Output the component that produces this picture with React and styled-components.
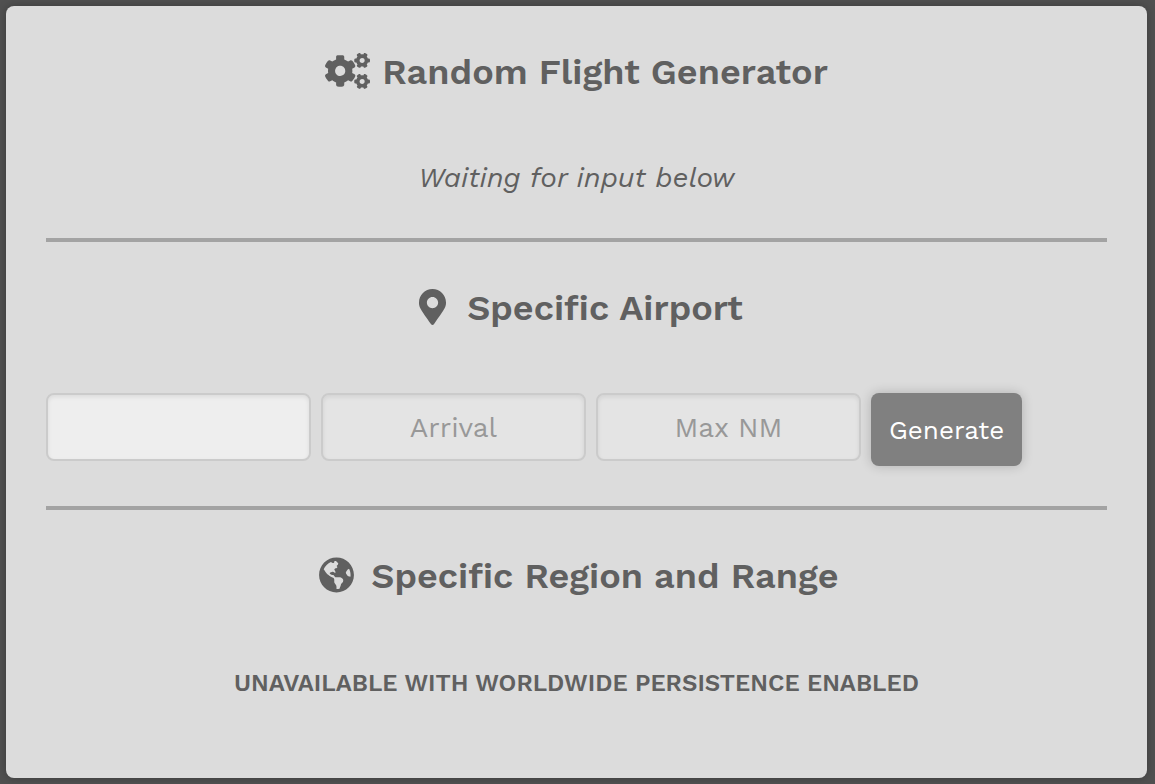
import styled, { createGlobalStyle } from 'styled-components'
import { FaCogs, FaMapMarkerAlt, FaGlobeAmericas } from 'react-icons/fa'

const App = () => {
  return (
    <>
      <GlobalStyle />
      <Panel>
        <Section>
          <Title as='h1'>
            <FaCogs aria-hidden='true' />
            Random Flight Generator
          </Title>
          <Status>Waiting for input below</Status>
        </Section>
        <Section $divided>
          <Title>
            <FaMapMarkerAlt aria-hidden='true' />
            Specific Airport
          </Title>
          <Form onSubmit={(e) => e.preventDefault()}>
            <Field type='text' aria-label='Departure' $active />
            <Field type='text' aria-label='Arrival' placeholder='Arrival' />
            <Field type='text' aria-label='Max NM' placeholder='Max NM' />
            <Generate type='submit'>Generate</Generate>
          </Form>
        </Section>
        <Section $divided>
          <Title>
            <FaGlobeAmericas aria-hidden='true' />
            Specific Region and Range
          </Title>
          <Notice>UNAVAILABLE WITH WORLDWIDE PERSISTENCE ENABLED</Notice>
        </Section>
      </Panel>
    </>
  )
}

const GlobalStyle = createGlobalStyle`
  * {
    box-sizing: border-box;
  }

  body {
    margin: 0;
    padding: 6px 8px 6px 6px;
    background: #505050;
    color: #606060;
    font-family: 'Work Sans', Inter, sans-serif;
  }
`

const Panel = styled.main`
  padding: 0 40px 33px;
  background: #dcdcdc;
  border-radius: 8px;
  box-shadow: 0 0 8px rgba(0, 0, 0, 0.25);
`

const Section = styled.section`
  padding: 43px 0 40px;
  border-top: ${(props) => (props.$divided ? '4px solid #a3a3a3' : 'none')};
`

const Title = styled.h2`
  display: flex;
  align-items: center;
  justify-content: center;
  gap: 12px;
  margin: 0 0 62px;
  font-size: 36px;
  font-weight: 600;
  line-height: 46px;

  svg {
    width: 45px;
    height: 36px;
    margin-bottom: 3px;
  }
`

const Status = styled.p`
  margin: 0;
  font-size: 28px;
  font-style: italic;
  line-height: 41px;
  text-align: center;
`

const Form = styled.form`
  display: flex;
  align-items: flex-start;
  gap: 10px;
`

const Field = styled.input`
  flex: 0 1 265px;
  min-width: 0;
  height: 68px;
  padding: 0 16px;
  border: 2px solid #cbcbcb;
  border-radius: 8px;
  background: ${(props) => (props.$active ? '#eeeeee' : '#e4e4e4')};
  box-shadow: inset 0 2px 4px rgba(0, 0, 0, 0.08);
  color: #606060;
  font: inherit;
  font-size: 28px;
  text-align: center;
  outline: none;

  &::placeholder {
    color: #989898;
    opacity: 1;
  }
`

const Generate = styled.button`
  height: 73px;
  padding: 0 18px;
  border: none;
  border-radius: 8px;
  background: #808080;
  box-shadow: 0 0 12px rgba(0, 0, 0, 0.2);
  color: #fff;
  font: inherit;
  font-size: 26px;
`

const Notice = styled.p`
  margin: 0;
  font-size: 24px;
  font-weight: 600;
  line-height: 44px;
  text-align: center;
`

export default App
